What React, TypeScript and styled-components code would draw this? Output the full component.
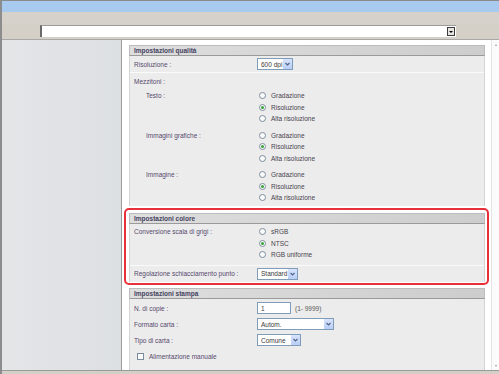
import React from "react";
import styled, { createGlobalStyle } from "styled-components";

const GlobalStyle = createGlobalStyle`
  html, body { margin: 0; padding: 0; overflow: hidden; }
  body { font-family: "Liberation Sans", Arial, sans-serif; }
`;

const Frame = styled.div`
  width: 499px;
  height: 374px;
  box-sizing: border-box;
  display: flex;
  flex-direction: column;
  border-top: 1px solid #8a8a8a;
  border-left: 2px solid #8c8c8c;
  background: #d4d0c8;
  overflow: hidden;
`;

const TitleBar = styled.div`
  flex: none;
  height: 11px;
  background: #a8caef;
`;

const MenuBar = styled.div`
  flex: none;
  height: 12px;
  background: #d6d2cb;
`;

const AddressRow = styled.div`
  flex: none;
  height: 14px;
  display: flex;
  align-items: center;
  padding-left: 38px;
`;

const AddressInput = styled.div`
  width: 416px;
  height: 12px;
  box-sizing: border-box;
  background: #fff;
  border-left: 2px solid #6a6a6a;
  border-top: 1px solid #9c9c9c;
  display: flex;
  justify-content: flex-end;
  align-items: center;
  padding-right: 1px;
`;

const DropButton = styled.div`
  width: 8px;
  height: 9px;
  box-sizing: border-box;
  border: 1px solid #3c3c3c;
  background: #e6e4e0;
  display: flex;
  align-items: center;
  justify-content: center;
  &::after {
    content: "";
    border-left: 2px solid transparent;
    border-right: 2px solid transparent;
    border-top: 2px solid #000;
  }
`;

const Body = styled.div`
  flex: 1;
  display: flex;
  margin-top: 1px;
  border-top: 1px solid #a8a8a8;
  min-height: 0;
`;

const Sidebar = styled.div`
  width: 119px;
  flex: none;
  background: linear-gradient(to right, #e3e5e7, #dde0e2);
  border-right: 1px solid #9c9c9c;
`;

const Main = styled.div`
  flex: 1;
  background: #fff;
  padding: 5px 6px 0 7px;
  display: flex;
  flex-direction: column;
  min-width: 0;
  overflow: hidden;
`;

const Scrollbar = styled.div`
  width: 8px;
  flex: none;
  background: #fbfbfb;
  border-left: 1px solid #e4e4e4;
  display: flex;
  flex-direction: column;
  justify-content: space-between;
  align-items: center;
  padding: 4px 0 3px;
  box-sizing: border-box;
`;

const ScrollArrow = styled.div<{ $down?: boolean }>`
  width: 0;
  height: 0;
  border-left: 1.5px solid transparent;
  border-right: 1.5px solid transparent;
  ${(p) => (p.$down ? "border-top: 2px solid #9a9a9a;" : "border-bottom: 2px solid #9a9a9a;")}
`;

const BottomBar = styled.div`
  flex: none;
  height: 4px;
  box-sizing: border-box;
  border-top: 1px solid #9a9a9a;
  background: #d4d0c8;
`;

const Panel = styled.div<{ $mt?: number }>`
  flex: none;
  margin-top: ${(p) => p.$mt ?? 0}px;
  background: #ececec;
  border-left: 1px solid #d4d4d4;
  border-right: 1px solid #d4d4d4;
  display: flex;
  flex-direction: column;
  font-size: 6.5px;
`;

const PanelHeader = styled.div`
  height: 11px;
  box-sizing: border-box;
  background: linear-gradient(to right, #dedede, #cdcdcd);
  border: 1px solid #bcbcbc;
  border-bottom-color: #9a9a9a;
  margin: 0 -1px;
  padding-left: 4px;
  display: flex;
  align-items: center;
  font-weight: bold;
  color: #45435e;
`;

const Highlight = styled.div`
  flex: none;
  margin: 2px -4px 0 -5px;
  padding: 3px 2px 1px 3px;
  border: 2px solid #e8303a;
  border-radius: 5px;
`;

const Row = styled.div<{ $h?: number; $divider?: boolean }>`
  height: ${(p) => p.$h ?? 16}px;
  flex: none;
  display: flex;
  align-items: center;
  padding-left: 4px;
  ${(p) => (p.$divider ? "border-bottom: 1px solid #fafafa;" : "")}
`;

const Label = styled.div<{ $indent?: boolean }>`
  width: ${(p) => (p.$indent ? 111 : 123)}px;
  padding-left: ${(p) => (p.$indent ? 12 : 0)}px;
  flex: none;
  color: #56496c;
  white-space: nowrap;
`;

const Group = styled.div<{ $mt?: number }>`
  display: flex;
  flex: none;
  padding-left: 4px;
  margin-top: ${(p) => p.$mt ?? 0}px;
`;

const GroupLabel = styled(Label)`
  height: 11.5px;
  line-height: 11.5px;
`;

const Options = styled.div`
  display: flex;
  flex-direction: column;
`;

const Option = styled.div`
  height: 11.5px;
  display: flex;
  align-items: center;
  gap: 5px;
  padding-left: 2px;
  color: #48434f;
`;

const Radio = styled.span<{ $checked?: boolean }>`
  width: 7px;
  height: 7px;
  box-sizing: border-box;
  border-radius: 50%;
  border: 1px solid #7d8c9c;
  background: #fbfbfb;
  display: flex;
  align-items: center;
  justify-content: center;
  &::after {
    content: "";
    width: 3px;
    height: 3px;
    border-radius: 50%;
    background: ${(p) => (p.$checked ? "#34a234" : "transparent")};
  }
`;

const SelectBox = styled.div<{ $w: number }>`
  width: ${(p) => p.$w}px;
  height: 12px;
  box-sizing: border-box;
  border: 1px solid #7f9db9;
  background: #fff;
  display: flex;
  align-items: center;
  color: #3a3a3a;
`;

const SelectText = styled.span`
  flex: 1;
  padding-left: 3px;
  white-space: nowrap;
  overflow: hidden;
`;

const SelectArrow = styled.span`
  width: 9px;
  height: 10px;
  flex: none;
  background: linear-gradient(#d8e4fc, #b9cdf6);
  display: flex;
  align-items: center;
  justify-content: center;
`;

const TextInput = styled.div<{ $w: number }>`
  width: ${(p) => p.$w}px;
  height: 12px;
  box-sizing: border-box;
  border: 1px solid #7f9db9;
  background: #fff;
  padding-left: 3px;
  display: flex;
  align-items: center;
  color: #3a3a3a;
`;

const Hint = styled.span`
  margin-left: 4px;
  color: #5a5a5a;
`;

const CheckRow = styled.div`
  height: 17px;
  flex: none;
  display: flex;
  align-items: center;
  gap: 5px;
  padding-left: 7px;
  color: #56496c;
`;

const Checkbox = styled.span`
  width: 7px;
  height: 7px;
  box-sizing: border-box;
  border: 1px solid #7d8c9c;
  background: #fbfbfb;
`;

const Chevron = () => (
  <svg width="5" height="4" viewBox="0 0 5 4">
    <path d="M0.5 1 L2.5 3 L4.5 1" fill="none" stroke="#4d6288" strokeWidth="1.1" />
  </svg>
);

const Select = ({ value, width }: { value: string; width: number }) => (
  <SelectBox $w={width}>
    <SelectText>{value}</SelectText>
    <SelectArrow>
      <Chevron />
    </SelectArrow>
  </SelectBox>
);

interface GroupProps {
  label: string;
  options: string[];
  checked: number;
  mt?: number;
  indent?: boolean;
}

const RadioGroup = ({ label, options, checked, mt, indent = true }: GroupProps) => (
  <Group $mt={mt}>
    <GroupLabel $indent={indent}>{label}</GroupLabel>
    <Options>
      {options.map((o, i) => (
        <Option key={o}>
          <Radio $checked={i === checked} />
          {o}
        </Option>
      ))}
    </Options>
  </Group>
);

const quality = ["Gradazione", "Risoluzione", "Alta risoluzione"];

export default function App() {
  return (
    <>
      <GlobalStyle />
      <Frame>
        <TitleBar />
        <MenuBar />
        <AddressRow>
          <AddressInput>
            <DropButton />
          </AddressInput>
        </AddressRow>
        <Body>
          <Sidebar />
          <Main>
            <Panel>
              <PanelHeader>Impostazioni qualità</PanelHeader>
              <Row $divider>
                <Label>Risoluzione :</Label>
                <Select value="600 dpi" width={36} />
              </Row>
              <Row $h={17}>
                <Label>Mezzitoni :</Label>
              </Row>
              <RadioGroup label="Testo :" options={quality} checked={1} />
              <RadioGroup label="Immagini grafiche :" options={quality} checked={1} mt={5} />
              <RadioGroup label="Immagine :" options={quality} checked={1} mt={5} />
              <Row $h={2} />
            </Panel>
            <Highlight>
              <Panel>
                <PanelHeader>Impostazioni colore</PanelHeader>
                <Row $h={2.5} />
                <RadioGroup
                  label="Conversione scala di grigi :"
                  options={["sRGB", "NTSC", "RGB uniforme"]}
                  checked={1}
                  indent={false}
                />
                <Row $h={4} $divider />
                <Row>
                  <Label>Regolazione schiacciamento punto :</Label>
                  <Select value="Standard" width={41} />
                </Row>
              </Panel>
            </Highlight>
            <Panel $mt={3}>
              <PanelHeader>Impostazioni stampa</PanelHeader>
              <Row $h={1.5} />
              <Row>
                <Label>N. di copie :</Label>
                <TextInput $w={34}>1</TextInput>
                <Hint>(1- 9999)</Hint>
              </Row>
              <Row>
                <Label>Formato carta :</Label>
                <Select value="Autom." width={77} />
              </Row>
              <Row>
                <Label>Tipo di carta :</Label>
                <Select value="Comune" width={44} />
              </Row>
              <CheckRow>
                <Checkbox />
                Alimentazione manuale
              </CheckRow>
              <Row $h={10} />
            </Panel>
          </Main>
          <Scrollbar>
            <ScrollArrow />
            <ScrollArrow $down />
          </Scrollbar>
        </Body>
        <BottomBar />
      </Frame>
    </>
  );
}
